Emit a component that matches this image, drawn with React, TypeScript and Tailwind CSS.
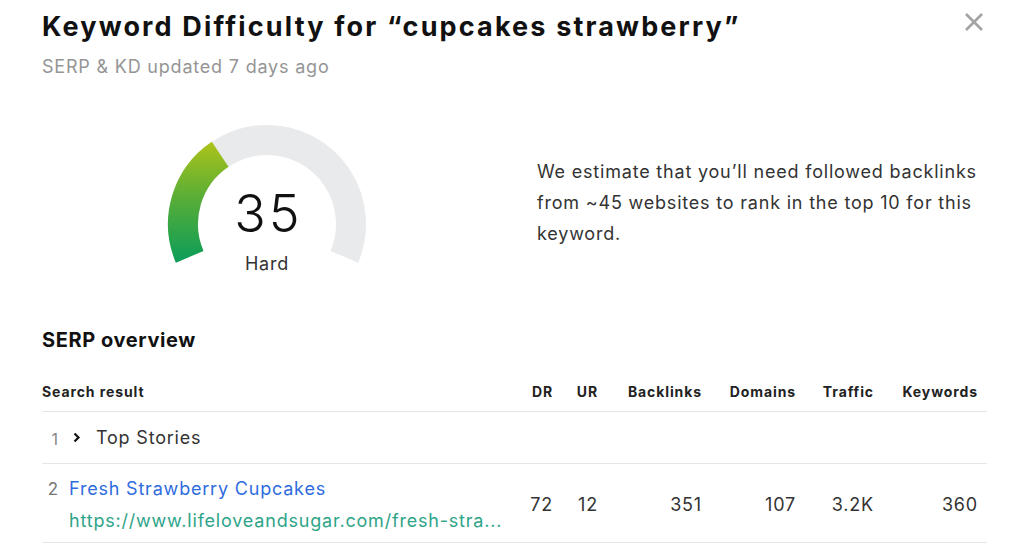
import React from "react";

const cx = 120;
const cy = 109;
const r = 84;

function pt(deg: number) {
  const a = (deg * Math.PI) / 180;
  return [cx + r * Math.cos(a), cy - r * Math.sin(a)];
}

function Gauge({ value }: { value: number }) {
  const start = 203;
  const sweep = 226;
  const end = start - sweep;
  const fillEnd = start - (sweep * value) / 100;
  const [sx, sy] = pt(start);
  const [ex, ey] = pt(end);
  const [fx, fy] = pt(fillEnd);
  return (
    <div className="relative w-[240px] h-[170px] shrink-0">
      <svg width="240" height="170" className="absolute inset-0">
        <defs>
          <linearGradient id="kd" gradientUnits="userSpaceOnUse" x1="0" y1="25" x2="0" y2="150">
            <stop offset="0" stopColor="#b0c419" />
            <stop offset="0.45" stopColor="#5aae36" />
            <stop offset="1" stopColor="#089c5a" />
          </linearGradient>
        </defs>
        <path
          d={`M${sx} ${sy} A${r} ${r} 0 1 1 ${ex} ${ey}`}
          fill="none"
          stroke="#e9eaec"
          strokeWidth="30"
        />
        <path
          d={`M${sx} ${sy} A${r} ${r} 0 0 1 ${fx} ${fy}`}
          fill="none"
          stroke="url(#kd)"
          strokeWidth="30"
        />
      </svg>
      <div className="relative flex flex-col items-center pt-[73px]">
        <span className="text-[52px] leading-none font-light tracking-[3px] pl-[3px] text-[#111]">{value}</span>
        <span className="mt-[15px] text-[18px] leading-none text-[#333]">Hard</span>
      </div>
    </div>
  );
}

const cols = "grid grid-cols-[minmax(0,1fr)_48px_45px_104px_94px_78px_104px] pr-[9px]";

export default function App() {
  return (
    <main className="relative min-h-screen bg-white font-['Inter',sans-serif] tracking-[0.05em] pl-[42px] pr-[37px] pt-[10px]">
      <button className="absolute top-[12px] right-[40px] text-[#a3a3a3]">
        <svg width="20" height="20" viewBox="0 0 20 20">
          <path d="M2 2l16 16M18 2L2 18" stroke="currentColor" strokeWidth="2.6" />
        </svg>
      </button>

      <h1 className="text-[27px] leading-[34px] font-bold tracking-[2.15px] text-[#111]">
        Keyword Difficulty for “cupcakes strawberry”
      </h1>
      <p className="mt-[10px] text-[18px] leading-[26px] text-[#959595]">
        SERP &amp; KD updated 7 days ago
      </p>

      <div className="mt-[35px] flex items-start">
        <div className="ml-[105px]">
          <Gauge value={35} />
        </div>
        <p className="ml-[150px] mt-[41px] w-[450px] text-[18px] leading-[31px] text-[#333]">
          We estimate that you’ll need followed backlinks from ~45 websites to rank in the top 10 for this keyword.
        </p>
      </div>

      <h2 className="mt-[42px] text-[20px] leading-[26px] font-bold tracking-[0.6px] text-[#111]">SERP overview</h2>

      <div className="mt-[29px]">
        <div className={`${cols} pb-[9px] border-b border-[#e6e6e6] text-[14px] leading-[20px] font-bold tracking-[0.9px] text-[#222]`}>
          <div>Search result</div>
          <div className="text-right">DR</div>
          <div className="text-right">UR</div>
          <div className="text-right">Backlinks</div>
          <div className="text-right">Domains</div>
          <div className="text-right">Traffic</div>
          <div className="text-right">Keywords</div>
        </div>

        <div className={`${cols} h-[52px] items-center border-b border-[#e6e6e6]`}>
          <div className="flex items-center">
            <span className="w-[16px] text-right text-[16px] leading-[26px] tracking-normal text-[#888] pt-[3px]">1</span>
            <svg width="8" height="11" viewBox="0 0 8 11" className="ml-[15px] text-[#111]">
              <path d="M1.5 1.5l4 4-4 4" fill="none" stroke="currentColor" strokeWidth="2.2" />
            </svg>
            <span className="ml-[15px] text-[18px] leading-[26px] text-[#333]">Top Stories</span>
          </div>
        </div>

        <div className={`${cols} pt-[8.5px] pb-[5.5px] items-center border-b border-[#e6e6e6] text-[18px] leading-[26px] text-[#333]`}>
          <div className="flex items-start min-w-0">
            <span className="w-[16px] shrink-0 text-right text-[17px] leading-[32px] tracking-normal text-[#777]">2</span>
            <div className="ml-[11px] min-w-0 leading-[32px]">
              <div className="text-[#2f6ce0] whitespace-nowrap">Fresh Strawberry Cupcakes</div>
              <div className="text-[#2ea488] whitespace-nowrap">https://www.lifeloveandsugar.com/fresh-stra...</div>
            </div>
          </div>
          <div className="text-right">72</div>
          <div className="text-right">12</div>
          <div className="text-right">351</div>
          <div className="text-right">107</div>
          <div className="text-right">3.2K</div>
          <div className="text-right">360</div>
        </div>
      </div>
    </main>
  );
}
